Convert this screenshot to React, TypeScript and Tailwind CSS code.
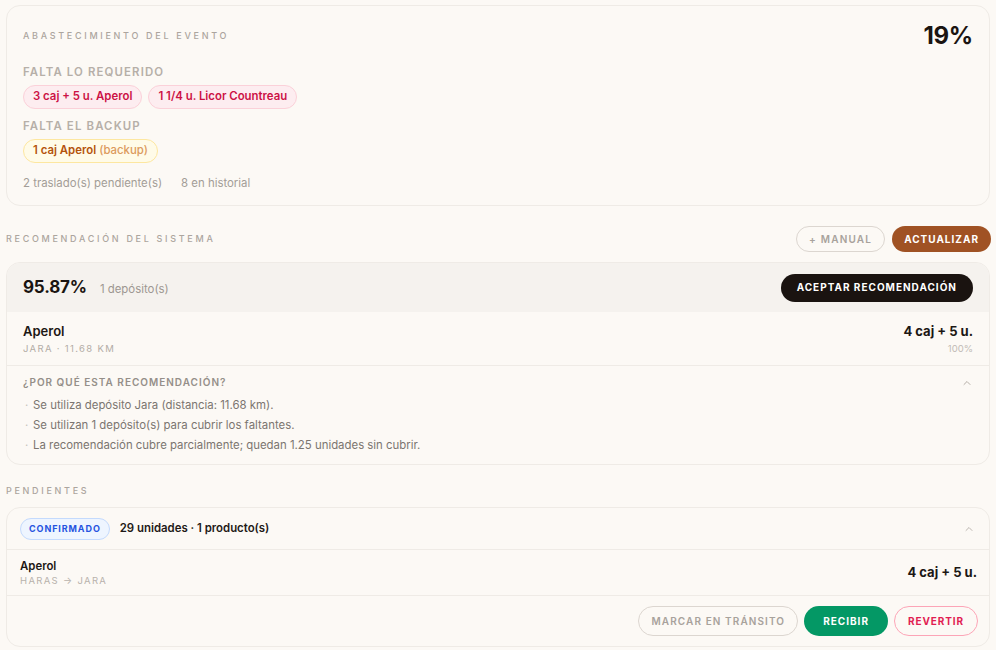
import React from "react";
import { ChevronUp } from "lucide-react";

const font = { fontFamily: "Inter, 'Noto Sans', sans-serif" };

function SectionLabel({ children }: { children: React.ReactNode }) {
  return (
    <div className="text-[9px] font-medium uppercase tracking-[0.3em] text-[#aca59e] leading-[12px]">
      {children}
    </div>
  );
}

function Pill({ tone, children }: { tone: "rose" | "amber"; children: React.ReactNode }) {
  const cls =
    tone === "rose"
      ? "bg-[#fdedf0] border-[#fbd1d9] text-[#cc1245]"
      : "bg-[#fffbe8] border-[#fde7a0] text-[#b4530c]";
  return (
    <span className={`inline-flex h-[24px] items-center rounded-full border px-[9px] text-[11.4px] font-semibold ${cls}`}>
      {children}
    </span>
  );
}

export default function App() {
  return (
    <div style={font} className="min-h-[650px] w-full bg-[#fcf9f5] px-[6px] pt-[5px] text-[#1c1714]">
      {/* Abastecimiento */}
      <div className="rounded-[14px] border border-[#efebe6] bg-[#fcf9f5] px-4 pt-4 pb-[14px]">
        <div className="flex h-[28px] items-center justify-between">
          <SectionLabel>Abastecimiento del evento</SectionLabel>
          <div className="text-[24px] font-bold leading-[28px] tracking-[-0.01em] text-[#1a1411]">19%</div>
        </div>
        <div className="mt-[14px] text-[11.4px] font-semibold uppercase leading-[16px] tracking-[0.1em] text-[#b6afa8]">
          Falta lo requerido
        </div>
        <div className="mt-[5px] flex gap-[6px]">
          <Pill tone="rose">3 caj + 5 u. Aperol</Pill>
          <Pill tone="rose">1 1/4 u. Licor Countreau</Pill>
        </div>
        <div className="mt-[9px] text-[11.4px] font-semibold uppercase leading-[16px] tracking-[0.1em] text-[#b6afa8]">
          Falta el backup
        </div>
        <div className="mt-[5px] flex">
          <Pill tone="amber">
            1 caj Aperol<span className="ml-[3px] font-medium text-[#dc9a5c]">(backup)</span>
          </Pill>
        </div>
        <div className="mt-[12px] flex gap-[19px] text-[11.4px] leading-[16px] text-[#a39d97]">
          <span>2 traslado(s) pendiente(s)</span>
          <span>8 en historial</span>
        </div>
      </div>

      {/* Recomendación */}
      <div className="mt-[20px] flex h-[26px] items-center justify-between">
        <SectionLabel>Recomendación del sistema</SectionLabel>
        <div className="-mr-[1px] flex gap-[7px]">
          <button className="h-[26px] rounded-full border border-[#dcd6d0] px-[12px] text-[10px] font-semibold uppercase tracking-[0.12em] text-[#a8a29c]">
            + Manual
          </button>
          <button className="h-[26px] rounded-full bg-[#a05224] px-[12px] text-[10px] font-bold uppercase tracking-[0.1em] text-white">
            Actualizar
          </button>
        </div>
      </div>

      <div className="mt-[10px] overflow-hidden rounded-[14px] border border-[#efebe6] bg-[#fcf9f5]">
        <div className="flex h-[49px] items-center justify-between bg-[#f5f2ee] px-4">
          <div className="flex items-baseline gap-[13px]">
            <span className="text-[17px] font-bold tracking-[-0.01em] text-[#1a1411]">95.87%</span>
            <span className="text-[11.4px] text-[#9d9791]">1 depósito(s)</span>
          </div>
          <button className="h-[28px] rounded-full bg-[#1a1310] px-[16px] text-[10px] font-bold uppercase tracking-[0.1em] text-white">
            Aceptar recomendación
          </button>
        </div>
        <div className="flex items-start justify-between border-b border-[#efebe6] px-4 pt-[10px] pb-[10px]">
          <div>
            <div className="text-[13px] font-semibold leading-[18px]">Aperol</div>
            <div className="mt-[3px] text-[9.5px] uppercase leading-[12px] tracking-[0.14em] text-[#b3aca5]">
              Jara · 11.68 km
            </div>
          </div>
          <div className="text-right">
            <div className="text-[13px] font-bold leading-[18px]">4 caj + 5 u.</div>
            <div className="mt-[3px] text-[9.5px] leading-[12px] text-[#c2bcb6]">100%</div>
          </div>
        </div>
        <div className="px-4 pt-[10px] pb-[11px]">
          <div className="flex h-[13px] items-center justify-between">
            <span className="text-[10px] font-semibold uppercase tracking-[0.1em] text-[#958f89]">
              ¿Por qué esta recomendación?
            </span>
            <ChevronUp size={12} strokeWidth={1.75} className="text-[#aaa39c]" />
          </div>
          <ul className="mt-[8px] flex flex-col gap-[4px] text-[11.4px] leading-[16px] text-[#7b7570]">
            {[
              "Se utiliza depósito Jara (distancia: 11.68 km).",
              "Se utilizan 1 depósito(s) para cubrir los faltantes.",
              "La recomendación cubre parcialmente; quedan 1.25 unidades sin cubrir.",
            ].map((t) => (
              <li key={t} className="flex">
                <span className="ml-[2px] w-[8px] text-[#c8c2bc]">·</span>
                <span>{t}</span>
              </li>
            ))}
          </ul>
        </div>
      </div>

      {/* Pendientes */}
      <div className="mt-[20px]">
        <SectionLabel>Pendientes</SectionLabel>
      </div>
      <div className="mt-[10px] rounded-[14px] border border-[#efebe6] bg-[#fcf9f5]">
        <div className="flex h-[42px] items-center justify-between border-b border-[#efebe6] pl-[13px] pr-[14px]">
          <div className="flex items-center gap-[10px]">
            <span className="inline-flex h-[22px] items-center rounded-full border border-[#c4dafd] bg-[#eef5ff] px-[8px] text-[9px] font-bold uppercase tracking-[0.1em] text-[#2553e0]">
              Confirmado
            </span>
            <span className="text-[11.4px] font-semibold text-[#1f1a17]">29 unidades · 1 producto(s)</span>
          </div>
          <ChevronUp size={12} strokeWidth={1.75} className="text-[#b2aca6]" />
        </div>
        <div className="flex h-[46px] items-center justify-between border-b border-[#efebe6] pl-[13px] pr-[12px]">
          <div>
            <div className="text-[11.4px] font-semibold leading-[15px]">Aperol</div>
            <div className="mt-[1px] text-[9.5px] uppercase leading-[12px] tracking-[0.14em] text-[#b8b2ac]">
              Haras → Jara
            </div>
          </div>
          <div className="text-[13px] font-bold">4 caj + 5 u.</div>
        </div>
        <div className="flex h-[50px] items-center justify-end gap-[6px] pr-[11px]">
          <button className="h-[30px] rounded-full border border-[#dcd6d0] px-[12px] text-[10px] font-semibold uppercase tracking-[0.11em] text-[#a8a29c]">
            Marcar en tránsito
          </button>
          <button className="h-[30px] rounded-full bg-[#049865] px-[19px] text-[10px] font-bold uppercase tracking-[0.1em] text-white">
            Recibir
          </button>
          <button className="h-[30px] rounded-full border border-[#fca5b7] px-[13px] text-[10px] font-bold uppercase tracking-[0.09em] text-[#e11d52]">
            Revertir
          </button>
        </div>
      </div>
    </div>
  );
}
